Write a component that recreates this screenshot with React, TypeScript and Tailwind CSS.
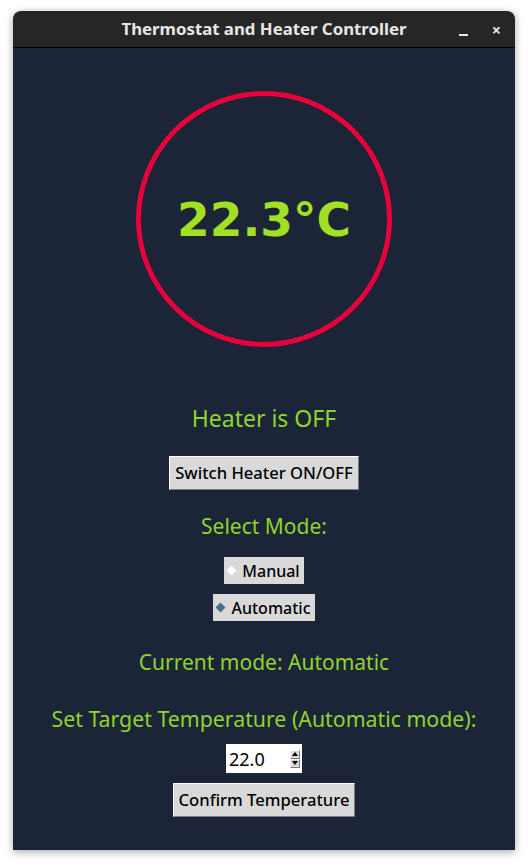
import React, { useState } from 'react';

const sans = "font-['Noto_Sans',_'Open_Sans',_sans-serif]";

function TkButton({ label, onClick }: { label: string; onClick?: () => void }) {
  return (
    <button
      onClick={onClick}
      className={`${sans} h-[34px] px-[5px] bg-[#d9d9d9] text-black text-[16.6px] font-medium leading-none border border-t-white border-l-white border-r-[#7a7a7a] border-b-[#7a7a7a]`}
    >
      {label}
    </button>
  );
}

function Radio({ label, checked, onClick }: { label: string; checked: boolean; onClick: () => void }) {
  return (
    <button
      onClick={onClick}
      className={`${sans} h-[27px] pl-[4px] pr-[4px] flex items-center gap-[7px] bg-[#d9d9d9] text-black text-[16px] font-medium leading-none`}
    >
      <span
        className={`w-[7px] h-[7px] rotate-45 ${checked ? 'bg-[#4d6b8c]' : 'bg-white'}`}
      />
      {label}
    </button>
  );
}

export default function App() {
  const [heaterOn, setHeaterOn] = useState(false);
  const [mode, setMode] = useState<'Manual' | 'Automatic'>('Automatic');
  const [target, setTarget] = useState(22.0);

  return (
    <div className="w-[528px] h-[866px] bg-white pt-[11px] pl-[13px]">
      <div className="w-[502px] rounded-t-[8px] overflow-hidden shadow-[0_2px_8px_rgba(0,0,0,0.35)]">
        {/* Title bar */}
        <div className="relative h-[37px] bg-[#262626] border-b border-black flex items-center justify-center">
          <span className={`${sans} text-[16.8px] font-bold text-[#e6e6e6]`}>
            Thermostat and Heater Controller
          </span>
          <span className="absolute right-[47px] top-[23px] w-[9px] h-[2px] bg-[#e6e6e6]" />
          <span className={`${sans} absolute right-[14px] top-[7px] text-[16px] font-bold text-[#e6e6e6]`}>×</span>
        </div>

        {/* Content */}
        <div className="h-[802px] bg-[#1c2438] flex flex-col items-center">
          <div className="mt-[43px] w-[256px] h-[256px] rounded-full border-[5px] border-[#e8003a] flex items-center justify-center">
            <span className="font-['DejaVu_Sans',_sans-serif] font-bold text-[47px] leading-none text-[#a3e023]">
              22.3°C
            </span>
          </div>

          <div className={`${sans} mt-[56px] h-[30px] leading-[30px] text-[23px] text-[#8fd42b]`}>
            {heaterOn ? 'Heater is ON' : 'Heater is OFF'}
          </div>

          <div className="mt-[23px]">
            <TkButton label="Switch Heater ON/OFF" onClick={() => setHeaterOn(!heaterOn)} />
          </div>

          <div className={`${sans} mt-[21px] h-[30px] leading-[30px] text-[21px] text-[#8fd42b]`}>
            Select Mode:
          </div>

          <div className="mt-[16px]">
            <Radio label="Manual" checked={mode === 'Manual'} onClick={() => setMode('Manual')} />
          </div>
          <div className="mt-[10px]">
            <Radio label="Automatic" checked={mode === 'Automatic'} onClick={() => setMode('Automatic')} />
          </div>

          <div className={`${sans} mt-[26px] h-[30px] leading-[30px] text-[21px] text-[#8fd42b]`}>
            Current mode: {mode}
          </div>

          <div className={`${sans} mt-[27px] h-[30px] leading-[30px] text-[21.3px] text-[#8fd42b]`}>
            Set Target Temperature (Automatic mode):
          </div>

          <div className="mt-[10px] w-[76px] h-[29px] bg-white flex items-center pl-[3px] pr-[2px]">
            <span className={`${sans} flex-1 text-[18px] leading-none text-black`}>{target.toFixed(1)}</span>
            <div className="flex flex-col gap-0">
              <button
                onClick={() => setTarget(target + 0.5)}
                className="w-[10px] h-[9px] bg-[#d9d9d9] border border-t-white border-l-white border-r-[#7a7a7a] border-b-[#7a7a7a] flex items-center justify-center"
              >
                <svg width="6" height="4" viewBox="0 0 6 4"><path d="M3 0 L6 4 L0 4 Z" fill="#000" /></svg>
              </button>
              <button
                onClick={() => setTarget(target - 0.5)}
                className="w-[10px] h-[9px] bg-[#d9d9d9] border border-t-white border-l-white border-r-[#7a7a7a] border-b-[#7a7a7a] flex items-center justify-center"
              >
                <svg width="6" height="4" viewBox="0 0 6 4"><path d="M0 0 L6 0 L3 4 Z" fill="#000" /></svg>
              </button>
            </div>
          </div>

          <div className="mt-[10px]">
            <TkButton label="Confirm Temperature" />
          </div>
        </div>
      </div>
    </div>
  );
}
